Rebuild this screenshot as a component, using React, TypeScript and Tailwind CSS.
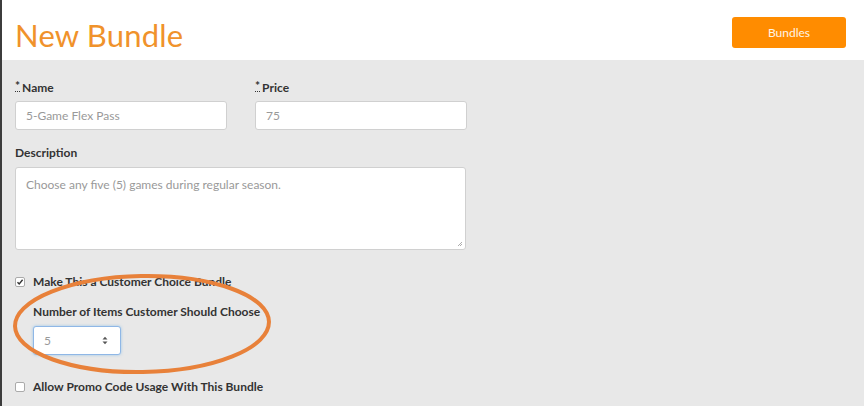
import React from "react";

export default function App() {
  return (
    <div
      className="w-[864px] h-[406px] overflow-hidden bg-[#e8e8e8] relative border-l-2 border-[#3c3c3c]"
      style={{ fontFamily: "Lato, 'Open Sans', sans-serif" }}
    >
      <div className="h-[60px] bg-white flex items-start justify-between pl-[13px] pr-[18px]">
        <h1 className="text-[31px] leading-none text-[#f0922b] mt-[20px] tracking-[0.2px]">New Bundle</h1>
        <button className="mt-[17px] w-[114px] h-[31px] rounded-[3px] bg-[#ff8c00] text-[12px] text-[#fff4e6]">
          Bundles
        </button>
      </div>
      <div className="pl-[13px] pt-[21px]">
        <div className="flex gap-[28px]">
          <div className="flex flex-col">
            <label className="text-[12px] font-bold text-[#333] leading-[14px] flex items-start">
              <abbr className="no-underline border-b border-dotted border-[#333] leading-[10px] mr-[2px]">*</abbr>Name
            </label>
            <div className="mt-[6px] w-[212px] h-[29px] bg-white border border-[#d0d0d0] rounded-[3px] flex items-center pl-[10px] text-[12px] text-[#999]">
              5-Game Flex Pass
            </div>
          </div>
          <div className="flex flex-col">
            <label className="text-[12px] font-bold text-[#333] leading-[14px] flex items-start">
              <abbr className="no-underline border-b border-dotted border-[#333] leading-[10px] mr-[2px]">*</abbr>Price
            </label>
            <div className="mt-[6px] w-[212px] h-[29px] bg-white border border-[#d0d0d0] rounded-[3px] flex items-center pl-[10px] text-[12px] text-[#999]">
              75
            </div>
          </div>
        </div>
        <div className="mt-[16px] text-[12px] font-bold text-[#333] leading-[14px]">Description</div>
        <div className="mt-[7px] w-[451px] h-[83px] bg-white border border-[#d0d0d0] rounded-[3px] relative px-[10px] pt-[8px] text-[12px] text-[#999]">
          Choose any five (5) games during regular season.
          <svg className="absolute right-[2px] bottom-[2px]" width="6" height="6" viewBox="0 0 6 6">
            <path d="M5 1 L1 5 M5 3 L3 5" stroke="#999" strokeWidth="0.8" />
          </svg>
        </div>
        <div className="mt-[23px] flex items-center gap-[8px] text-[12px] font-bold text-[#333]">
          <span className="w-[10px] h-[10px] rounded-[2px] border border-[#aaa] bg-white flex items-center justify-center">
            <svg width="8" height="8" viewBox="0 0 8 8">
              <path d="M1.5 4.2 L3.2 6 L6.6 1.8" stroke="#333" strokeWidth="1.4" fill="none" />
            </svg>
          </span>
          Make This a Customer Choice Bundle
        </div>
        <div className="pl-[18px]">
          <div className="mt-[14px] text-[12px] font-bold text-[#333] leading-[14px]">
            Number of Items Customer Should Choose
          </div>
          <div className="mt-[7px] w-[88px] h-[29px] bg-white border border-[#8fb7e6] rounded-[3px] shadow-[0_0_3px_rgba(102,175,233,0.6)] flex items-center justify-between pl-[10px] pr-[12px] text-[12px] text-[#999]">
            5
            <svg width="6" height="9" viewBox="0 0 6 9">
              <path d="M0.5 3.5 L3 0.8 L5.5 3.5 Z M0.5 5.5 L3 8.2 L5.5 5.5 Z" fill="#555" />
            </svg>
          </div>
        </div>
        <div className="mt-[23px] flex items-center gap-[8px] text-[12px] font-bold text-[#333]">
          <span className="w-[10px] h-[10px] rounded-[2px] border border-[#aaa] bg-white" />
          Allow Promo Code Usage With This Bundle
        </div>
      </div>
      <svg className="absolute left-0 top-0 pointer-events-none" width="864" height="406">
        <ellipse cx="140" cy="324" rx="127" ry="48" fill="none" stroke="#e8813a" strokeWidth="4" transform="rotate(-1 140 324)" />
      </svg>
    </div>
  );
}
